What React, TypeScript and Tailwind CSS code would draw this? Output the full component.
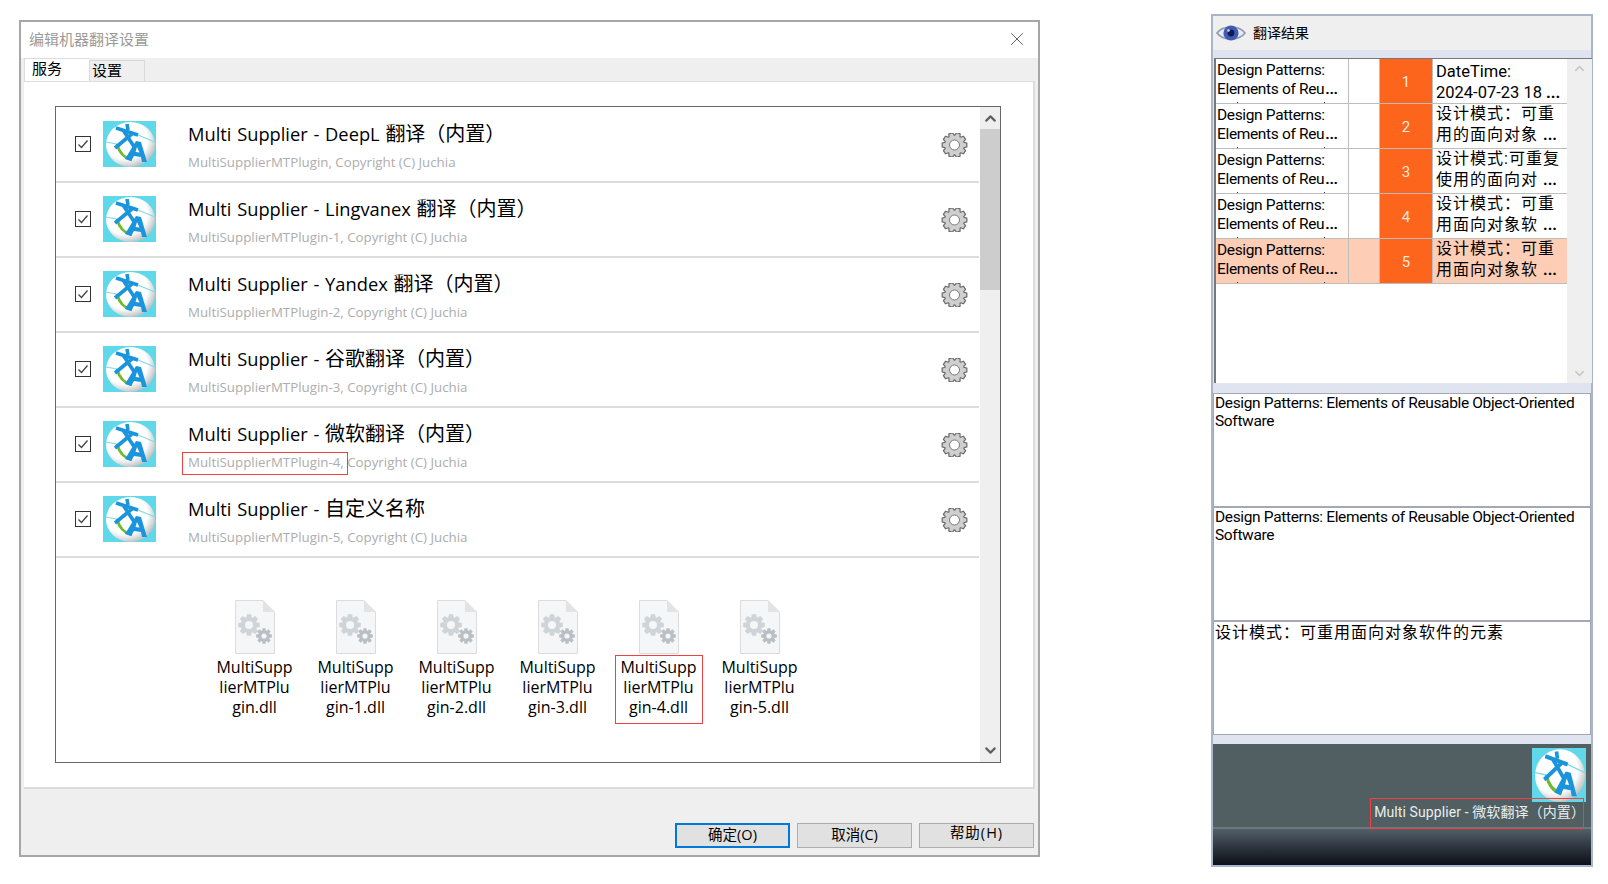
import { ChevronUp, ChevronDown, X } from 'lucide-react';

const UI_FONT = "font-['Open_Sans','Noto_Sans_CJK_SC',sans-serif]";
const RESULT_FONT = "font-['Roboto','Noto_Sans_CJK_SC',sans-serif]";

const services = [
  { name: 'Multi Supplier - DeepL ', cjk: '翻译（内置）', sub: 'MultiSupplierMTPlugin, Copyright (C) Juchia' },
  { name: 'Multi Supplier - Lingvanex ', cjk: '翻译（内置）', sub: 'MultiSupplierMTPlugin-1, Copyright (C) Juchia' },
  { name: 'Multi Supplier - Yandex ', cjk: '翻译（内置）', sub: 'MultiSupplierMTPlugin-2, Copyright (C) Juchia' },
  { name: 'Multi Supplier - ', cjk: '谷歌翻译（内置）', sub: 'MultiSupplierMTPlugin-3, Copyright (C) Juchia' },
  { name: 'Multi Supplier - ', cjk: '微软翻译（内置）', sub: 'MultiSupplierMTPlugin-4, Copyright (C) Juchia' },
  { name: 'Multi Supplier - ', cjk: '自定义名称', sub: 'MultiSupplierMTPlugin-5, Copyright (C) Juchia' },
];

const dlls = [
  ['MultiSupp', 'lierMTPlu', 'gin.dll'],
  ['MultiSupp', 'lierMTPlu', 'gin-1.dll'],
  ['MultiSupp', 'lierMTPlu', 'gin-2.dll'],
  ['MultiSupp', 'lierMTPlu', 'gin-3.dll'],
  ['MultiSupp', 'lierMTPlu', 'gin-4.dll'],
  ['MultiSupp', 'lierMTPlu', 'gin-5.dll'],
];

const results = [
  { n: 1, lines: ['DateTime:', '2024-07-23 18'], latin: true },
  { n: 2, lines: ['设计模式：可重', '用的面向对象'] },
  { n: 3, lines: ['设计模式:可重复', '使用的面向对'] },
  { n: 4, lines: ['设计模式：可重', '用面向对象软'] },
  { n: 5, lines: ['设计模式：可重', '用面向对象软'], active: true },
];

// builds a toothed outline for the gear drawings
function gearPath(cx: number, cy: number, outer: number, inner: number, teeth: number) {
  const pts: string[] = [];
  const step = (Math.PI * 2) / teeth;
  for (let i = 0; i < teeth; i++) {
    const a = i * step;
    const offs: [number, number][] = [
      [-0.5, inner],
      [-0.27, outer],
      [0.27, outer],
      [0.5, inner],
    ];
    offs.forEach(([o, r]) => {
      const t = a + o * step * 0.9;
      pts.push(`${(cx + Math.cos(t) * r).toFixed(2)} ${(cy + Math.sin(t) * r).toFixed(2)}`);
    });
  }
  return 'M' + pts.join('L') + 'Z';
}

function Logo({ className, id }: { className: string; id: string }) {
  return (
    <svg viewBox="0 0 53 46" preserveAspectRatio="none" className={className}>
      <defs>
        <radialGradient id={id} cx="0.4" cy="0.38" r="0.72">
          <stop offset="0.62" stopColor="#ffffff" />
          <stop offset="1" stopColor="#a3a9ab" />
        </radialGradient>
      </defs>
      <rect width="53" height="46" fill="#5fd8e9" />
      <ellipse cx="27.5" cy="23.5" rx="24.5" ry="22.5" fill={`url(#${id})`} />
      <path d="M3 21L14 23M30 12L52 21" stroke="#7fdbe6" strokeWidth="1.2" fill="none" />
      <path d="M14 23C16 31 21 37 29 39" stroke="#6cbb2a" strokeWidth="2.8" fill="none" />
      <path d="M13 7L35 14M24 3L25 9M20 9L32 27M30 12L12 27" stroke="#1a94dc" strokeWidth="3.6" fill="none" />
      <path d="M33 20L38 21L44 41L39 41L38 36L31 35L28 40L22 38ZM34 26L32.5 31L36.5 31.5Z" fill="#1a94dc" fillRule="evenodd" />
    </svg>
  );
}

function Gear() {
  return (
    <svg viewBox="0 0 27 24" className="w-[27px] h-[24px]">
      <path d={gearPath(13.5, 12, 12.5, 9.8, 10)} fill="#cfcfcf" stroke="#6a6a6a" strokeWidth="1.2" strokeLinejoin="round" />
      <circle cx="13.5" cy="12" r="5" fill="#ffffff" stroke="#7a7a7a" strokeWidth="1" />
    </svg>
  );
}

function DllIcon() {
  return (
    <svg viewBox="0 0 40 54" className="w-[40px] h-[54px]">
      <path d="M.5.5H28L39.5 12V53.5H.5Z" fill="#f5f6f7" stroke="#dcdcdc" />
      <path d="M28 .5V12H39.5Z" fill="#e3e3e3" />
      <path d={gearPath(14, 25, 11, 8, 8)} fill="#cfd4d8" />
      <circle cx="14" cy="25" r="4" fill="#f5f6f7" />
      <path d={gearPath(29, 36, 8, 5.6, 8)} fill="#b9bfc4" />
      <circle cx="29" cy="36" r="2.6" fill="#f5f6f7" />
    </svg>
  );
}

function Checkbox() {
  return (
    <div className="w-[16px] h-[16px] border border-[#333333] bg-white flex items-center justify-center shrink-0">
      <svg viewBox="0 0 14 14" className="w-[14px] h-[14px]">
        <path d="M2.5 7.5L5.5 10.5L11.5 3.5" stroke="#444444" strokeWidth="1.3" fill="none" />
      </svg>
    </div>
  );
}

function ServiceRow({ name, cjk, sub }: { name: string; cjk: string; sub: string }) {
  return (
    <div className="h-[73px] box-content border-b-2 border-[#dcdcdc] flex items-center">
      <div className="ml-[19px] mb-[2px]">
        <Checkbox />
      </div>
      <Logo id={`logo-${sub.length}-${name.length}-${cjk.length}`} className="ml-[12px] mb-[2px] w-[53px] h-[46px] shrink-0" />
      <div className="ml-[32px] pt-[3px] flex flex-col">
        <div className="text-[18.3px] leading-[26px] text-black whitespace-pre [word-spacing:1px]">
          {name}
          <span className="text-[20px]">{cjk}</span>
        </div>
        <div className="mt-[6px] text-[13.3px] leading-[18px] text-[#adadad]">{sub}</div>
      </div>
      <div className="ml-auto mr-[11px]">
        <Gear />
      </div>
    </div>
  );
}

function ServiceList() {
  return (
    <div className="ml-[31px] mt-[24px] h-[657px] w-[946px] border border-[#666666] flex">
      <div className="w-[923px] pt-[1px] flex flex-col">
        {services.map((s) => (
          <ServiceRow key={s.sub} name={s.name} cjk={s.cjk} sub={s.sub} />
        ))}
        <div className="mt-[42px] ml-[148px] flex">
          {dlls.map((lines, i) => (
            <div key={i} className="w-[101px] flex flex-col items-center">
              <DllIcon />
              <div className="mt-[3px] text-[16px] leading-[20px] text-black text-center">
                {lines.map((l) => (
                  <div key={l}>{l}</div>
                ))}
              </div>
            </div>
          ))}
        </div>
      </div>
      <div className="ml-[1px] w-[20px] bg-[#efefef] flex flex-col items-center">
        <div className="h-[22px] flex items-center justify-center">
          <ChevronUp size={17} strokeWidth={3} className="text-[#606060]" />
        </div>
        <div className="w-full h-[161px] bg-[#cdcdcd]" />
        <div className="mt-auto h-[24px] flex items-center justify-center">
          <ChevronDown size={17} strokeWidth={3} className="text-[#606060]" />
        </div>
      </div>
    </div>
  );
}

function SettingsDialog() {
  return (
    <div className="relative mt-[6px] w-[1021px] h-[837px] border-2 border-[#a6a6a6] bg-[#efefef] flex flex-col shrink-0">
      <div className="h-[36px] bg-white flex items-center justify-between pl-[8px] pr-[10px] pb-[2px] shrink-0">
        <span className="text-[15px] text-[#9a9a9a]">编辑机器翻译设置</span>
        <X size={22} strokeWidth={1} className="text-[#555555]" />
      </div>
      <div className="h-[23px] flex items-end pl-[3px] shrink-0">
        <div className="w-[65px] h-[23px] bg-white border-t border-l border-[#dcdcdc] pl-[7px] text-[15px] leading-[18px] text-black">服务</div>
        <div className="w-[56px] h-[21px] bg-[#efefef] border border-b-0 border-[#d9d9d9] pl-[2px] text-[15px] leading-[19px] text-black">设置</div>
      </div>
      <div className="ml-[3px] w-[1011px] h-[708px] bg-white border-r-2 border-b-2 border-t border-[#dcdcdc] shrink-0">
        <ServiceList />
      </div>
      <div className="mt-[34px] flex justify-end gap-[7px] pr-[4px]">
        <button className="w-[115px] h-[25px] bg-[#e1e1e1] border-2 border-[#0078d7] text-[14.5px] leading-none text-black">确定(O)</button>
        <button className="w-[115px] h-[25px] bg-[#e1e1e1] border border-[#adadad] text-[14.5px] leading-none text-black">取消(C)</button>
        <button className="w-[115px] h-[25px] bg-[#e1e1e1] border border-[#adadad] text-[14.5px] tracking-[1px] leading-none text-black pb-[4px]">帮助(H)</button>
      </div>
      <div className="absolute left-[161px] top-[430px] w-[166px] h-[23px] border border-[#f04040]" />
      <div className="absolute left-[594px] top-[633px] w-[88px] h-[69px] border border-[#f04040]" />
    </div>
  );
}

function ResultRow({ n, lines, latin, active }: { n: number; lines: string[]; latin?: boolean; active?: boolean }) {
  const bg = active ? 'bg-[#fdcdb5]' : 'bg-white';
  return (
    <div className={`h-[45px] border-b border-[#bdbdbd] flex ${bg}`}>
      <div className="w-[133px] border-r border-[#bdbdbd] pl-[1px] pt-[2px] text-[15.5px] tracking-[-0.35px] leading-[19px] text-black overflow-hidden">
        <div>Design Patterns:</div>
        <div className="flex items-center">
          <span>Elements of Reu</span>
          <span className="ml-[1px] font-bold">...</span>
        </div>
        <div className="mt-[3px] ml-[20px] w-[88px] flex justify-between">
          <span className="w-[1px] h-[1px] bg-[#333333]" />
          <span className="w-[1px] h-[1px] bg-[#333333]" />
        </div>
      </div>
      <div className="w-[30px]" />
      <div className="w-[54px] pt-[2px] border-x border-[#bdbdbd] bg-[#fd641c] flex items-center justify-center text-[15px] text-[#ffe8d8]">{n}</div>
      <div className={`w-[134px] pl-[3px] text-black overflow-hidden ${latin ? 'text-[16.5px] leading-[21px] pt-[2px]' : 'text-[16px] leading-[21px] tracking-[1px] -mt-[1px]'}`}>
        <div className="whitespace-nowrap">{lines[0]}</div>
        <div className="whitespace-nowrap">
          {lines[1]} <span className="font-bold tracking-normal">...</span>
        </div>
      </div>
    </div>
  );
}

function TextPane({ children }: { children: React.ReactNode }) {
  return (
    <div className={`h-[114px] border border-[#a4a8b2] bg-white px-[1px] text-[15.5px] tracking-[-0.35px] leading-[18px] text-black shrink-0 ${RESULT_FONT}`}>
      {children}
    </div>
  );
}

function ResultPanel() {
  return (
    <div className="relative ml-[171px] w-[382px] h-[853px] border-2 border-[#a9b5c9] bg-[#e0e4f0] flex flex-col shrink-0">
      <div className="h-[34px] bg-[#efefef] flex items-center pl-[3px] shrink-0">
        <svg viewBox="0 0 30 20" className="w-[30px] h-[20px]">
          <path d="M1 10C7 2 23 2 29 10C23 18 7 18 1 10Z" fill="#e8ecf6" stroke="#8f99ad" strokeWidth="1.6" />
          <circle cx="15" cy="10" r="7.6" fill="#3f5cb4" />
          <circle cx="15" cy="10" r="3.4" fill="#101a4e" />
          <circle cx="12.5" cy="7.5" r="1.3" fill="#cfd8f5" />
        </svg>
        <span className="ml-[7px] pb-[2px] text-[14px] text-black">翻译结果</span>
      </div>
      <div className={`mt-[8px] w-[378px] h-[325px] ml-[1px] border-l-2 border-t border-[#777777] bg-white flex shrink-0 ${RESULT_FONT}`}>
        <div className="w-[351px]">
          {results.map((r) => (
            <ResultRow key={r.n} {...r} />
          ))}
        </div>
        <div className="flex-1 bg-[#efefef] flex flex-col items-center justify-between py-[2px]">
          <ChevronUp size={15} strokeWidth={2.5} className="text-[#c8c8c8]" />
          <ChevronDown size={15} strokeWidth={2.5} className="text-[#c8c8c8]" />
        </div>
      </div>
      <div className="mt-[10px] flex flex-col">
        <TextPane>Design Patterns: Elements of Reusable Object-Oriented Software</TextPane>
        <TextPane>Design Patterns: Elements of Reusable Object-Oriented Software</TextPane>
        <TextPane>
          <div className="-mt-[1px] text-[16px] tracking-[1px] leading-[24px]">设计模式：可重用面向对象软件的元素</div>
        </TextPane>
      </div>
      <div className="mt-[9px] flex-1 flex flex-col bg-[#515f62]">
        <div className="h-[85px] relative flex flex-col items-end shrink-0 border-b-2 border-[#6d787b]">
          <Logo id="logo-panel" className="mt-[4px] mr-[5px] w-[54px] h-[54px]" />
          <div className={`mr-[6px] text-[14px] tracking-[0.1px] leading-[20px] text-[#e8eef0] ${RESULT_FONT}`}>Multi Supplier - 微软翻译（内置）</div>
        </div>
        <div className="flex-1 bg-gradient-to-b from-[#52606a] to-[#0e1019]" />
      </div>
      <div className="absolute left-[157px] top-[782px] w-[214px] h-[31px] border border-[#f04040]" />
    </div>
  );
}

export default function App() {
  return (
    <div className={`w-[1608px] h-[884px] bg-white overflow-hidden pl-[19px] pt-[14px] flex items-start ${UI_FONT}`}>
      <SettingsDialog />
      <ResultPanel />
    </div>
  );
}
